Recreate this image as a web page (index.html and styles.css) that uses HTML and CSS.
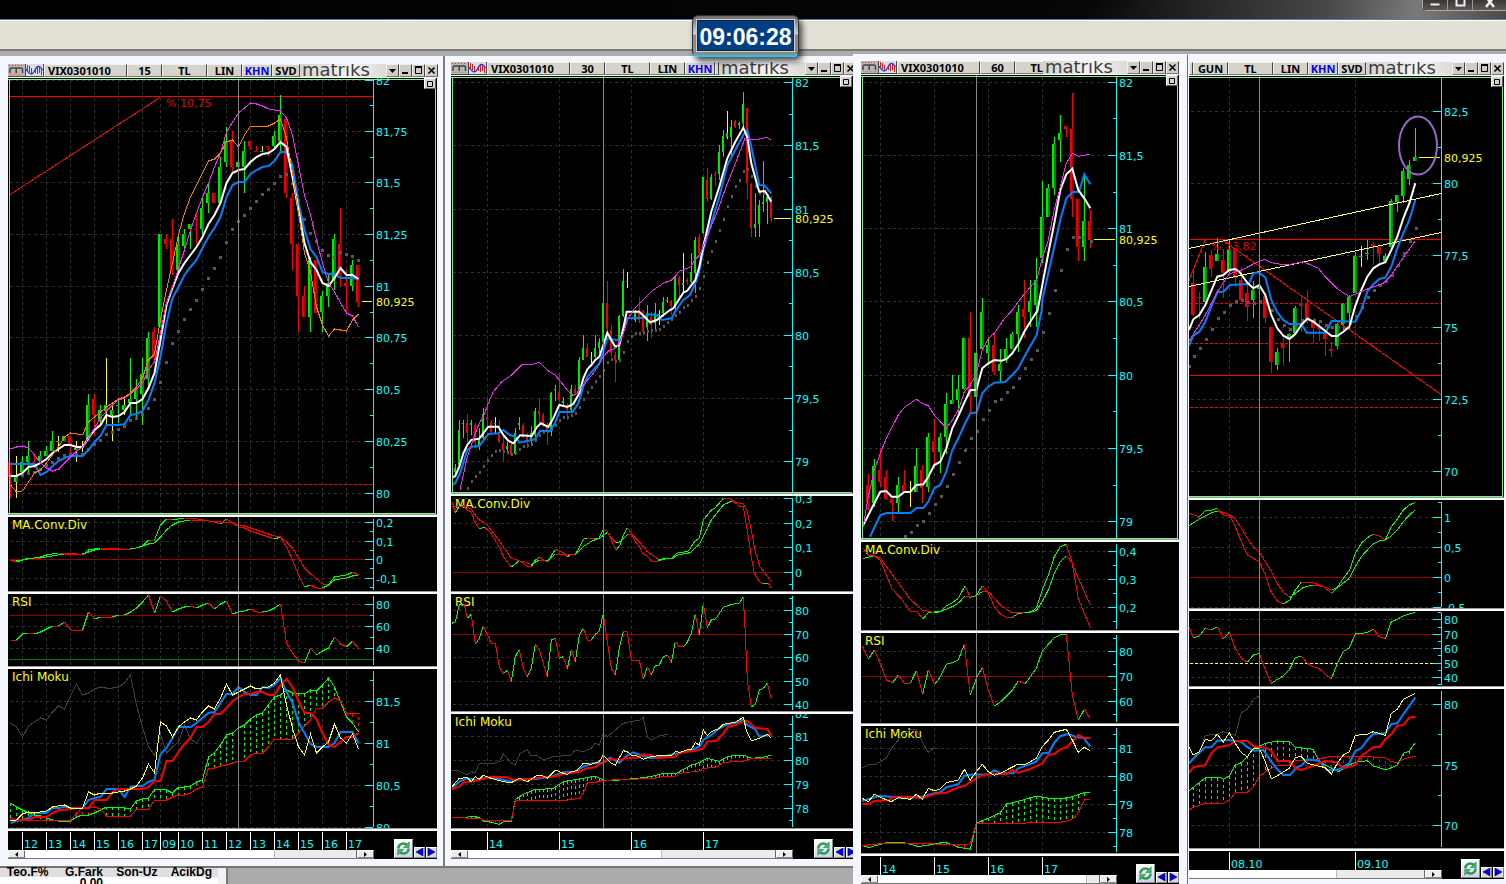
FILE: index.html
```html
<!DOCTYPE html>
<html lang="tr">
<head>
<meta charset="utf-8">
<title>Matriks - VIX0301010</title>
<link rel="stylesheet" href="styles.css">
</head>
<body>
<svg class="defs" aria-hidden="true">
  <symbol id="i-brand" viewBox="0 0 18 13">
    <rect x="0" y="0" width="17" height="12" fill="#b9b7b3"/>
    <path d="M1 1.500h15" stroke="#e33" stroke-dasharray="1 2"/>
    <path d="M2 10.500h14" stroke="#f66" stroke-dasharray="1 1"/>
    <path d="M2 9V5.500Q2 4 3.500 4H13Q14.500 4 14.500 5.500V9M8.200 4V9" fill="none" stroke="#444" stroke-width="1.500"/>
  </symbol>
  <symbol id="i-wave" viewBox="0 0 18 13">
    <rect x="0" y="0" width="17" height="12" fill="#dcdce4"/>
    <path d="M1.500 1V7M3.500 2V8M5.500 4V10M9.500 4V9M11.500 2V10M13.500 3V9M15.500 5V11" stroke="#e01818"/>
    <path d="M0 5C3 10 6 12 8.500 7S13 0 16.500 6" fill="none" stroke="#2233dd" stroke-width="1.300"/>
  </symbol>
  <symbol id="i-down" viewBox="0 0 11 11"><path d="M2 4H9L5.500 8Z" fill="#000"/></symbol>
  <symbol id="i-min" viewBox="0 0 11 11"><path d="M2 7H8V9H2Z" fill="#000"/></symbol>
  <symbol id="i-max" viewBox="0 0 11 11"><path d="M2.500 2.500H8.500V8.500H2.500Z" fill="none" stroke="#000"/><path d="M2 2H9" stroke="#000" stroke-width="2"/></symbol>
  <symbol id="i-close" viewBox="0 0 11 11"><path d="M2.500 2.500L8.500 8.500M8.500 2.500L2.500 8.500" stroke="#000" stroke-width="1.600"/></symbol>
  <symbol id="i-box" viewBox="0 0 11 11"><path d="M2.500 2.500H7.500V7.500H2.500Z" fill="none" stroke="#000"/></symbol>
  <symbol id="i-refresh" viewBox="0 0 18 18">
    <path d="M3.500 9A5.500 5.500 0 0 1 12.500 5" fill="none" stroke="#2f9a4c" stroke-width="2.600"/>
    <path d="M14.500 9A5.500 5.500 0 0 1 5.500 13" fill="none" stroke="#2f9a4c" stroke-width="2.600"/>
    <path d="M15 2V8H9Z" fill="#49b862" stroke="#17803a" stroke-width=".6"/>
    <path d="M3 16V10H9Z" fill="#49b862" stroke="#17803a" stroke-width=".6"/>
  </symbol>
  <symbol id="i-prev" viewBox="0 0 9 9"><path d="M8 0V8L1 4Z" fill="#0000e0" stroke="#000080" stroke-width=".6"/></symbol>
  <symbol id="i-next" viewBox="0 0 9 9"><path d="M1 0V8L8 4Z" fill="#0000e0" stroke="#000080" stroke-width=".6"/></symbol>
  <symbol id="i-left" viewBox="0 0 7 7"><path d="M5 1V6L2 3.500Z" fill="#000"/></symbol>
  <symbol id="i-right" viewBox="0 0 7 7"><path d="M2 1V6L5 3.500Z" fill="#000"/></symbol>
</svg>

<header class="titlebar">
  <div class="sysbuttons">
    <button aria-label="Minimize"><svg viewBox="0 0 14 10"><path d="M2 3H12V6H2Z" fill="#eee" stroke="#444"/></svg></button>
    <button aria-label="Maximize"><svg viewBox="0 0 14 10"><path d="M3.500 -3V5.500H11.500V-3" fill="none" stroke="#eee" stroke-width="2"/></svg></button>
    <button aria-label="Close"><svg viewBox="0 0 14 10"><path d="M3 -3L11 7M11 -3L3 7" stroke="#eee" stroke-width="2.500"/></svg></button>
  </div>
</header>
<div class="toolbar"></div>
<time class="clock"><span>09:06:28</span></time>

<main class="desktop">
  <div class="left">
    <div class="pair">
      <section class="win win-a">
        <div class="bar">
          <svg class="ic"><use href="#i-brand"/></svg><svg class="ic"><use href="#i-wave"/></svg>
          <button class="sym">VIX0301010</button><button class="per">15</button><button class="cur">TL</button><button class="lin">LIN</button><button class="khn">KHN</button><button class="svd">SVD</button>
          <span class="logo">matriks</span>
          <button class="ctl" aria-label="Menu"><svg><use href="#i-down"/></svg></button><button class="ctl" aria-label="Minimize"><svg><use href="#i-min"/></svg></button><button class="ctl" aria-label="Maximize"><svg><use href="#i-max"/></svg></button><button class="ctl" aria-label="Close"><svg><use href="#i-close"/></svg></button>
        </div>
        <div class="panes" data-chart="a"><button class="corner" aria-label="Expand"><svg><use href="#i-box"/></svg></button></div>
        <div class="foot">
          <div class="timeline"><div class="scroll"><button aria-label="Scroll left"><svg><use href="#i-left"/></svg></button><i class="track"></i><i class="thumb"></i><button aria-label="Scroll right"><svg><use href="#i-right"/></svg></button></div></div>
          <div class="nav"><button class="refresh" aria-label="Refresh"><svg><use href="#i-refresh"/></svg></button><button aria-label="Previous"><svg><use href="#i-prev"/></svg></button><button aria-label="Next"><svg><use href="#i-next"/></svg></button></div>
        </div>
      </section>
      <section class="win win-b">
        <div class="bar">
          <svg class="ic"><use href="#i-brand"/></svg><svg class="ic"><use href="#i-wave"/></svg>
          <button class="sym">VIX0301010</button><button class="per">30</button><button class="cur">TL</button><button class="lin">LIN</button><button class="khn">KHN</button><button class="sliver" aria-label="SVD"></button>
          <span class="logo">matriks</span>
          <button class="ctl" aria-label="Menu"><svg><use href="#i-down"/></svg></button><button class="ctl" aria-label="Minimize"><svg><use href="#i-min"/></svg></button><button class="ctl" aria-label="Maximize"><svg><use href="#i-max"/></svg></button><button class="ctl" aria-label="Close"><svg><use href="#i-close"/></svg></button>
        </div>
        <div class="panes" data-chart="b"><button class="corner" aria-label="Expand"><svg><use href="#i-box"/></svg></button></div>
        <div class="foot">
          <div class="timeline"><div class="scroll"><button aria-label="Scroll left"><svg><use href="#i-left"/></svg></button><i class="track"></i><i class="thumb"></i><button aria-label="Scroll right"><svg><use href="#i-right"/></svg></button></div></div>
          <div class="nav"><button class="refresh" aria-label="Refresh"><svg><use href="#i-refresh"/></svg></button><button aria-label="Previous"><svg><use href="#i-prev"/></svg></button><button aria-label="Next"><svg><use href="#i-next"/></svg></button></div>
        </div>
      </section>
    </div>
    <div class="strip">
      <table class="quotes">
        <thead><tr><th>Teo.F%</th><th>G.Fark</th><th>Son-Uz</th><th>AcikDg</th></tr></thead>
        <tbody><tr><td></td><td>0.00</td><td></td><td></td></tr></tbody>
      </table>
    </div>
  </div>
  <section class="win win-c">
    <div class="bar">
      <svg class="ic"><use href="#i-brand"/></svg><svg class="ic"><use href="#i-wave"/></svg>
      <button class="sym">VIX0301010</button><button class="per">60</button><button class="cut">TL</button>
      <span class="logo">matriks</span>
      <button class="ctl" aria-label="Menu"><svg><use href="#i-down"/></svg></button><button class="ctl" aria-label="Minimize"><svg><use href="#i-min"/></svg></button><button class="ctl" aria-label="Maximize"><svg><use href="#i-max"/></svg></button><button class="ctl" aria-label="Close"><svg><use href="#i-close"/></svg></button>
    </div>
    <div class="panes" data-chart="c"><button class="corner" aria-label="Expand"><svg><use href="#i-box"/></svg></button></div>
    <div class="foot">
      <div class="timeline"><div class="scroll"><button aria-label="Scroll left"><svg><use href="#i-left"/></svg></button><i class="track"></i><i class="thumb"></i><button aria-label="Scroll right"><svg><use href="#i-right"/></svg></button></div></div>
      <div class="nav"><button class="refresh" aria-label="Refresh"><svg><use href="#i-refresh"/></svg></button><button aria-label="Previous"><svg><use href="#i-prev"/></svg></button><button aria-label="Next"><svg><use href="#i-next"/></svg></button></div>
    </div>
  </section>
  <section class="win win-d">
    <div class="bar">
      <button class="sliver" aria-label="Symbol"></button><button class="per">GUN</button><button class="cur">TL</button><button class="lin">LIN</button><button class="khn">KHN</button><button class="svd">SVD</button>
      <span class="logo">matriks</span>
      <button class="ctl" aria-label="Menu"><svg><use href="#i-down"/></svg></button><button class="ctl" aria-label="Minimize"><svg><use href="#i-min"/></svg></button><button class="ctl" aria-label="Maximize"><svg><use href="#i-max"/></svg></button><button class="ctl" aria-label="Close"><svg><use href="#i-close"/></svg></button>
    </div>
    <div class="panes" data-chart="d"><button class="corner" aria-label="Expand"><svg><use href="#i-box"/></svg></button></div>
    <div class="foot">
      <div class="timeline"><div class="scroll"><i class="track"></i><i class="thumb"></i><button aria-label="Scroll right"><svg><use href="#i-right"/></svg></button></div></div>
      <div class="nav"><button class="refresh" aria-label="Refresh"><svg><use href="#i-refresh"/></svg></button><button aria-label="Previous"><svg><use href="#i-prev"/></svg></button><button aria-label="Next"><svg><use href="#i-next"/></svg></button></div>
    </div>
  </section>
</main>
<script src="charts.js"></script>
</body>
</html>
```
FILE: styles.css
```css
* { box-sizing: border-box; }
body {
  margin: 0;
  height: 100vh;
  overflow: hidden;
  display: flex;
  flex-direction: column;
  background: #ababab;
  font-family: "DejaVu Sans", Verdana, sans-serif;
  font-size: 11px;
}
button { margin: 0; padding: 0; font: inherit; border: 0; overflow: hidden; }
svg { display: block; }
.defs { position: absolute; width: 0; height: 0; }

.titlebar {
  flex: none;
  height: 20px;
  display: flex;
  justify-content: flex-end;
  align-items: flex-start;
  background: linear-gradient(100deg, #000 0%, #060606 72%, #484848 88%, #7c7a78 94%, #4c4a48 100%);
  border-bottom: 1px solid #5b7f9a;
}
.sysbuttons { display: flex; border: 1px solid #aaa; border-top: 0; border-right: 0; border-radius: 0 0 0 5px; background: #4a4644; }
.sysbuttons button { width: 25px; height: 10px; background: linear-gradient(#3a3634, #5c5855); border-right: 1px solid #999; }
.sysbuttons button:last-child { width: 33px; border: 0; }
.sysbuttons svg { width: 14px; height: 10px; margin: auto; }
.toolbar { flex: none; height: 31px; background: #e3e1d5; border-top: 1px solid #fff; border-bottom: 2px solid #7c7a78; }

.clock {
  position: absolute;
  top: 15px;
  left: calc(50% - 61px);
  width: 107px;
  height: 42px;
  padding: 4px;
  border: 1px solid #333;
  border-bottom: 2px solid #28c4ec;
  border-radius: 6px;
  background: linear-gradient(#6c6c6c, #d0d0d0 45%, #8a8a8a 50%, #8a8a8a);
  box-shadow: 3px 4px 6px rgba(0,0,0,.7);
}
.clock span {
  display: block;
  height: 31px;
  border: 1px solid #222;
  outline: 1px solid #ccc;
  background: #003f85;
  color: #fff;
  font: bold 23px/32px "Liberation Sans", Arial, sans-serif;
  text-align: center;
}

.desktop { flex: 1; min-height: 0; display: grid; grid-template-columns: 853fr 335fr 318fr; align-items: start; }
.left { padding-top: 5px; }
.pair { display: grid; grid-template-columns: 445fr 408fr; }
.win { background: #f4f7fd; overflow: hidden; }
.win-a { padding: 8px 6px 7px 8px; border-right: 2px solid #7f7c7e; border-bottom: 2px solid #757575; }
.win-b { padding: 6px 0 7px 6px; border-bottom: 2px solid #757575; }
.win-c { margin-top: 3px; padding: 6px 8px 20px 8px; border-right: 1px solid #6e6e6e; border-top: 1px solid #fff; }
.win-d { margin-top: 3px; padding: 8px 2px 20px 1px; }

.bar { display: flex; height: 13px; margin-bottom: 1px; background: #4b4b4b; overflow: hidden; }
.win-b .bar, .win-b .nav { margin-right: -4px; }
.win-a .bar { margin-right: -1px; }
.bar button {
  flex: none;
  height: 13px;
  background: #d6d3cb;
  border: 1px solid #f2f0ea;
  border-right-color: #444;
  border-bottom-color: #777;
  color: #000;
  font: bold 11px/12px "Noto Sans", "Open Sans", sans-serif;
}
.ic { flex: none; width: 18px; height: 13px; }
.bar .sym { width: 83px; text-align: left; padding-left: 3px; }
.bar .per, .bar .lin { width: 35px; }
.bar .cur { width: 45px; }
.bar .khn { width: 30px; color: #0000f0; }
.bar .svd { width: 28px; }
.bar .sliver { width: 4px; }
.bar .cut { width: 28px; text-align: right; border-right: 0; }
.logo {
  flex: 1;
  min-width: 0;
  height: 13px;
  padding-left: 2px;
  background: linear-gradient(90deg, #d4d2ce, #f4f4f4 60%, #dcdad6);
  color: #3d3d3d;
  font-size: 18px;
  line-height: 12px;
}
.bar .ctl { width: 13px; background: #d0cdc8; }
.bar .ctl svg { width: 11px; height: 11px; }

.panes { position: relative; background: #000; }
.pane { display: block; border-bottom: 1px solid #9a9a9a; background: #000; }
.pane + .pane { border-top: 2px solid #fff; }
.pane svg, .axis { width: 100%; height: auto; overflow: hidden; }
.corner { position: absolute; top: 0; right: 1px; width: 12px; height: 11px; background: #d8d5d0; border: 1px solid #fff; border-right-color: #666; border-bottom-color: #666; }
.corner svg { width: 11px; height: 11px; }

.foot { display: flex; align-items: flex-end; background: #000; border-top: 2px solid #fff; }
.timeline { min-width: 0; }
.win-a .timeline { flex: 366; } .win-a .nav { flex: 63; }
.win-b .timeline { flex: 342; } .win-b .nav { flex: 64; }
.win-c .timeline { flex: 256; } .win-c .nav { flex: 62; }
.win-d .timeline { flex: 253; } .win-d .nav { flex: 62; }
.scroll { display: flex; height: 9px; background: #fff; border-bottom: 1px solid #777; }
.scroll button { flex: none; width: 17px; background: #ececec; border: 1px solid #fff; border-right-color: #666; border-bottom-color: #888; }
.scroll svg { width: 7px; height: 7px; margin: auto; }
.thumb { background: #ebebeb; border-right: 1px solid #666; border-left: 1px solid #bbb; }
.win-a .track { flex: 251; } .win-a .thumb { flex: 81; }
.win-b .track { flex: 194; } .win-b .thumb { flex: 114; }
.win-c .track { flex: 210; } .win-c .thumb { flex: 12; }
.win-d .track { flex: 148; } .win-d .thumb { flex: 88; }
.nav { display: flex; justify-content: flex-end; align-items: flex-end; gap: 1px; padding-bottom: 1px; }
.nav button { width: 11px; height: 11px; background: #dcdad6; border: 1px solid #fff; border-right-color: #888; border-bottom-color: #888; }
.nav svg { width: 9px; height: 9px; }
.nav .refresh { width: 19px; height: 19px; background: linear-gradient(#fff, #cdd0ee); }
.nav .refresh svg { width: 17px; height: 17px; }

.strip { display: flex; }
.quotes { border-spacing: 0; table-layout: fixed; width: 226px; border-right: 8px solid #f0f2f6; background: #fff; font: bold 12px/9px "Liberation Sans", Arial, sans-serif; box-shadow: 2px 0 #777; }
.quotes th, .quotes td { padding: 0 6px 0 0; text-align: right; height: 9px; }
.quotes th { background: #e0dede; }
.quotes td { line-height: 13px; }

text { font-family: "DejaVu Sans", Verdana, sans-serif; font-size: 11px; }
.title { font-size: 12px; }
.cyan { fill: #00ffff; }
.yellow { fill: #ffff00; }
.red { fill: #e00000; }
```
FILE: charts.js
```js
const NS = 'http://www.w3.org/2000/svg';
const THIRD = 3;
const WHITE = '#fff', BLUE = '#0080ff', MAG = '#ff20ff', ORANGE = '#ff8000', YEL = '#ffff40', RED = '#ff0000', GREEN = '#00ff00', GREY = '#404040';

function add(parent, tag, attrs, text) {
  const n = document.createElementNS(NS, tag);
  for (const k in attrs) n.setAttribute(k, attrs[k]);
  if (text !== undefined) n.textContent = text;
  parent.appendChild(n);
  return n;
}

// "@n" sets the vertical origin; pairs are in thirds of a unit
function pairs(ox, s) {
  let oy = 0;
  const out = [];
  for (const t of s.trim().split(/\s+/)) {
    if (t[0] === '@') { oy = +t.slice(1); continue; }
    const [a, b] = t.split(',').map(Number);
    out.push([ox + a / THIRD, oy + b / THIRD]);
  }
  return out;
}
// one value for each six-unit bar
const bars = s => s.trim().split(/\s+/).map((v, i) => [10.5 + 6 * i, +v]);

function barCandles(s) {
  return s.trim().split('|').map((r, i) => {
    const [hi, top, bot, lo, c] = r.trim().split(' ');
    return { x: 10 + 6 * i, hi: +hi, top: +top, bot: +bot, lo: +lo, c };
  });
}
function pairCandles(ox, s) {
  return s.trim().split('|').map(r => {
    const [oy, x, hi, top, bot, lo, c] = r.trim().split(' ');
    const y = v => Math.round(+oy + v / THIRD);
    return { x: Math.floor(ox + x / THIRD), hi: y(hi), top: y(top), bot: y(bot), lo: y(lo), c };
  });
}
const path = p => 'M' + p.map(q => q[0].toFixed(1) + ' ' + q[1].toFixed(1)).join('L');

function line(svg, p, color, w) {
  add(svg, 'path', { d: path(p), fill: 'none', stroke: color, 'stroke-width': w, 'shape-rendering': w > 1 ? 'auto' : 'crispEdges' });
}
// green while rising, red while falling
function updown(svg, p) {
  for (let i = 1; i < p.length; i++)
    line(svg, [p[i - 1], p[i]], p[i][1] < p[i - 1][1] ? GREEN : RED, 1);
}
function at(p, x) {
  for (let i = 1; i < p.length; i++)
    if (x <= p[i][0] + 0.01) {
      const [a, b] = [p[i - 1], p[i]];
      return a[1] + (b[1] - a[1]) * (x - a[0]) / (b[0] - a[0]);
    }
  return p[p.length - 1][1];
}
function cloud(svg, a, b, x0, step) {
  for (let x = x0; x <= a[a.length - 1][0]; x += step) {
    const ya = at(a, x), yb = at(b, x);
    if (Math.abs(ya - yb) < 1) continue;
    add(svg, 'line', { x1: x, x2: x, y1: ya, y2: yb, stroke: ya < yb ? GREEN : RED, 'stroke-dasharray': '3 3', 'shape-rendering': 'crispEdges' });
  }
  line(svg, a, GREEN, 1);
  line(svg, b, RED, 1);
}
function candles(svg, list, w) {
  const col = { g: ['#00e800', '#008800', '#00ff00'], r: ['#f00000', '#a00000', '#ff0000'], y: ['#ffff00', '#c0c000', '#ffff00'] };
  for (const k of list) {
    const c = col[k.c];
    const body = k.c === 'y' ? col.g : c;
    add(svg, 'rect', { x: k.x, y: k.hi, width: 1, height: Math.max(1, k.lo - k.hi), fill: c[2] });
    const h = Math.max(1, k.bot - k.top);
    add(svg, 'rect', { x: k.x - w + 2, y: k.top, width: w - 2, height: h, fill: body[0] });
    add(svg, 'rect', { x: k.x, y: k.top, width: w > 3 ? 2 : 1, height: h, fill: w > 3 ? body[1] : body[0] });
  }
}

const A = 440, C = 850, D = 1180;

const charts = {
  a: {
    x: 8, w: 429, axis: 373, cursor: 238, step: 6, x0: 10.5, foot: [831, 19, 366],
    grid: [[22, '12'], [46, '13'], [70, '14'], [94, '15'], [118, '16'], [142, '17'], [160, '09'], [178, '10'], [202, '11'], [226, '12'], [250, '13'], [274, '14'], [298, '15'], [322, '16'], [346, '17']],
    panes: [
      { y: 78, h: 436, main: 1, major: [[80, '82'], [131, '81,75'], [182, '81,5'], [234, '81,25'], [286, '81'], [337, '80,75'], [389, '80,5'], [441, '80,25'], [493, '80']], minor: [105, 157, 208, 260, 312, 363, 415, 467], price: [301, 362],
        rules: [[96, RED], [484, RED, '3 2']], segs: [[10, 194, 160, 97, RED]], note: [166, 107, '% 10,75'], width: 4,
        candles: barCandles('462 462 477 498 r|456 477 482 498 y|456 462 472 472 g|441 456 462 472 g|456 462 463 468 r|451 456 461 461 g|446 451 456 456 g|431 441 451 451 g|436 441 442 452 y|436 436 441 441 g|436 436 446 455 r|441 448 450 462 y|441 447 448 452 y|394 405 441 441 g|394 399 415 436 r|405 410 420 425 g|358 405 411 424 y|405 410 415 441 y|400 405 406 423 g|399 405 410 415 y|358 399 403 415 g|379 389 399 417 g|358 374 394 425 g|332 338 379 388 g|327 332 358 360 r|234 234 327 327 g|234 239 244 249 r|219 239 270 275 r|234 244 270 275 g|229 234 246 249 g|224 224 229 249 g|213 229 230 244 r|198 208 229 234 g|183 193 203 213 g|193 193 203 203 r|157 167 203 203 g|127 141 162 167 g|131 141 167 172 r|157 162 167 169 g|141 151 167 193 g|141 141 146 150 r|146 151 152 152 r|146 151 152 152 y|146 146 147 156 r|131 136 146 150 g|95 115 141 152 g|119 119 193 198 r|193 198 244 270 r|244 244 296 332 r|286 296 317 317 r|257 260 317 332 g|260 260 313 313 r|291 296 312 332 g|275 283 296 307 g|234 239 280 290 g|208 244 275 286 r|270 283 286 312 r|260 265 286 291 g|265 265 302 307 r'),
        dots: bars('475 476 475 473 472 469 465 462 458 455 454 454 454 449 444 440 434 432 429 426 420 418 414 408 399 382 362 343 331 319 309 300 289 278 268 257 242 229 221 215 208 201 194 189 183 176 174 183 200 219 233 241 250 255 257 252 254 256 260'),
        lines: [
          [BLUE, 2, bars('464 464 464 464 464 475 472 466 461 458 456 456 456 450 442 436 425 425 425 424 415 414 411 400 383 357 323 298 287 275 267 260 248 237 228 217 197 185 182 182 174 170 167 166 161 152 152 165 203 230 249 257 272 274 274 278 278 278 279')],
          [WHITE, 2, bars('476 476 473 467 466 463 459 453 449 445 445 447 447 438 430 425 415 417 416 412 403 403 399 388 373 340 305 288 273 263 255 247 237 224 215 203 183 173 170 169 162 157 154 153 149 142 147 177 210 243 262 270 283 286 278 268 275 275 279')],
          [MAG, 1, bars('449 447 446 448 455 463 468 471 469 463 457 451 447 438 428 418 411 405 400 398 394 389 383 370 362 333 303 287 268 250 230 213 197 183 167 153 132 122 113 108 103 104 106 109 110 111 118 135 165 195 215 240 263 283 292 303 313 316 327')],
          [ORANGE, 1, bars('485 492 491 482 473 470 463 455 447 437 433 434 435 422 417 412 407 403 399 397 393 387 378 360 354 320 290 263 235 213 197 185 173 161 159 153 142 140 147 135 126 126 126 126 123 119 138 173 213 253 272 307 325 336 329 330 331 320 314')]] },
      { y: 517, h: 74, title: 'MA.Conv.Div', major: [[522, '0,2'], [541, '0,1'], [559, '0'], [578, '-0,1']], minor: [531, 550, 568, 587], rules: [[559, '#900']],
        ud: [bars('560 562 560 558 558 557 555 554 553 553 553 554 555 550 549 548 548 548 549 549 549 548 546 540 540 525 519 520 519 518 518 519 520 521 522 524 519 523 527 528 531 533 535 537 539 537 547 560 575 587 585 588 588 585 577 576 575 572 575'),
          bars('560 561 560 559 558 558 557 556 555 554 554 554 554 552 550 549 549 549 549 549 549 548 546 544 543 537 530 525 522 521 520 520 520 521 521 522 522 523 525 526 528 530 532 534 536 537 542 548 558 568 574 579 584 585 580 579 578 576 575')] },
      { y: 594, h: 72, title: 'RSI', major: [[604, '80'], [626, '60'], [648, '40']], minor: [615, 637], rules: [[615, '#900'], [659, '#008000']],
        ud: [bars('640 640 634 633 634 632 629 626 626 622 630 630 630 612 619 617 617 617 615 615 612 608 602 595 613 596 601 612 609 607 606 608 605 603 609 604 601 614 612 611 609 612 612 611 608 604 643 653 661 663 648 655 651 648 637 644 647 641 649')] },
      { y: 669, h: 159, title: 'Ichi Moku', major: [[701, '81,5'], [743, '81'], [785, '80,5'], [827, '80']], minor: [680, 722, 764, 806],
        cloud: [bars('803 807 810 813 815 816 818 820 821 821 821 817 815 815 813 810 807 807 807 808 809 801 799 798 789 789 790 793 787 787 786 782 780 757 753 745 735 733 728 725 719 715 713 705 697 695 690 693 693 694 690 691 685 678 687 702 717 723 732'),
          bars('820 820 820 820 820 820 820 820 820 820 820 813 808 808 807 809 816 816 816 816 816 809 809 809 800 800 800 797 795 795 793 789 787 768 768 766 765 763 761 761 755 753 753 747 739 739 739 739 733 726 720 708 708 702 698 701 713 713 713')],
        lines: [
          [GREY, 1, bars('723 727 737 726 722 718 720 712 706 709 696 684 695 693 689 687 688 688 687 683 675 705 727 747 755 734 753 747 742 725 739 743 734')],
          [BLUE, 2, bars('823 821 820 818 813 813 813 808 808 807 808 808 808 800 798 797 789 789 789 797 787 786 786 782 780 754 748 738 727 727 727 723 718 713 712 703 694 694 687 692 695 695 687 688 685 678 692 703 722 733 744 747 747 747 743 732 732 732 743')],
          [RED, 2, bars('819 820 820 820 817 817 817 813 810 810 809 808 808 808 800 800 800 792 789 789 789 789 789 787 781 781 761 761 752 744 738 727 727 722 714 714 708 701 697 694 694 692 692 695 695 685 679 687 701 713 713 719 733 745 747 742 737 737 733')],
          [YEL, 1, bars('821 820 814 812 813 812 811 807 806 805 808 808 808 792 795 793 793 793 792 791 789 786 778 764 773 722 726 737 727 722 718 720 712 706 709 698 684 695 692 689 686 689 688 687 683 675 705 728 747 755 734 753 747 742 724 738 743 734 749')]] }
    ]
  },
  b: {
    x: 451, w: 402, axis: 792, cursor: 603, step: 4, x0: 451.5, foot: [831, 19, 342],
    grid: [[487, '14'], [559, '15'], [631, '16'], [703, '17']],
    panes: [
      { y: 76, h: 417, main: 1, major: [[82, '82'], [145, '81,5'], [209, '81'], [272, '80,5'], [335, '80'], [398, '79,5'], [461, '79']], minor: [114, 177, 240, 303, 366, 430], price: [218, 774], width: 3, dot: 2,
        candles: pairCandles(A, '310 46 462 475 485 498 g|310 58 330 360 465 470 g|310 70 330 338 341 385 g|310 82 312 340 368 395 r|310 94 330 338 345 375 g|310 106 340 345 395 415 r|310 118 355 385 410 420 g|310 130 295 312 385 390 g|310 142 265 320 330 350 r|310 154 330 335 365 372 r|310 166 320 340 343 368 y|310 178 330 365 395 398 r|310 190 370 398 420 452 r|310 202 395 408 418 430 g|310 214 400 405 435 437 r|310 226 355 368 433 435 g|310 238 320 340 345 360 g|310 250 338 345 380 385 r|310 262 370 380 395 415 r|310 274 348 370 390 398 g|310 286 295 304 375 380 g|310 298 265 304 312 340 r|310 310 310 315 340 350 r|310 322 338 345 365 404 r|310 334 245 248 362 378 g|310 346 225 238 241 272 g|310 358 190 245 270 275 r|310 370 262 272 280 290 g|310 382 278 285 300 330 r|310 394 225 238 300 308 g|310 406 225 238 250 255 r|310 418 140 150 240 245 g|310 430 75 115 150 150 g|310 442 100 115 140 142 r|310 454 125 140 143 160 y|310 466 75 115 142 145 g|310 478 85 95 115 130 g|310 490 -22 -20 95 150 g|310 502 -87 -22 58 80 r|310 514 45 60 130 140 r|310 526 125 135 150 215 r|310 538 15 18 150 155 g|310 550 -123 -87 18 20 g|50 562 667 693 696 713 y|50 586 780 790 810 815 g|50 598 741 779 810 820 r|310 610 0 2 65 75 r|310 622 -15 10 50 92 g|310 634 5 20 45 85 r|50 646 760 790 820 840 g|50 658 780 792 796 825 y|50 670 742 755 790 800 g|50 682 742 750 753 760 g|50 694 750 752 768 795 r|50 706 680 683 775 780 g|50 718 677 683 705 740 r|50 730 610 700 705 730 y|50 742 685 690 695 705 r|50 754 609 667 695 700 g|50 766 560 570 670 730 g|50 778 553 562 610 625 r|50 790 380 381 550 552 g|50 802 354 390 448 455 r|50 814 372 381 447 450 g|50 826 363 371 375 408 r|50 838 286 307 371 390 g|50 850 240 258 307 322 g|50 862 184 250 260 266 y|50 874 210 230 260 320 g|50 886 210 212 230 235 r|50 898 217 220 225 238 g|50 910 126 163 220 235 g|50 922 174 175 400 448 r|50 934 400 402 535 560 r|50 946 430 523 533 560 g|50 958 450 465 523 560 g|50 970 333 457 463 486 g|50 982 430 440 457 522 g|50 994 437 440 505 515 r'),
        dots: pairs(A, '@310 86,534 98,514 110,499 122,487 134,469 146,450 158,436 170,425 182,421 194,425 206,428 218,433 230,428 242,418 254,408 266,405 278,402 290,390 302,375 314,368 326,365 338,358 350,345 362,330 374,323 386,322 398,317 410,310 422,293 434,268 446,246 458,231 470,214 482,200 494,180 504,156 516,148 528,155 540,152 552,126 564,94 576,78 588,69 600,69 612,66 624,64 636,62 648,62 660,58 672,48 684,38 696,28 708,15 720,8 @50 732,773 744,765 756,750 768,738 780,715 792,680 804,638 816,604 828,573 840,542 852,508 864,469 876,440 888,410 900,392 912,364 924,359 936,378 948,408 960,430 972,430 984,436 994,444'),
        lines: [
          [BLUE, 2, pairs(A, '@310 38,523 46,520 60,490 82,420 94,410 118,408 145,372 175,370 190,360 210,375 226,380 238,398 285,388 300,363 330,363 345,340 358,306 398,306 415,280 430,230 442,200 478,160 490,125 502,85 540,92 550,65 562,25 610,23 622,13 650,15 665,30 695,25 705,5 @50 730,750 750,735 766,700 778,665 790,600 838,440 862,345 886,300 910,255 922,240 934,290 958,405 972,406 994,430')],
          [WHITE, 2, pairs(A, '@310 38,502 46,498 58,470 70,430 82,405 94,390 118,386 130,370 145,350 175,350 190,375 205,392 220,400 240,376 275,378 290,352 303,340 325,351 340,325 358,285 382,291 400,282 418,250 430,205 442,178 454,165 466,150 478,140 490,105 502,68 514,90 526,110 538,105 550,55 560,5 598,5 630,37 650,30 690,0 @50 700,775 730,728 742,722 766,690 778,650 790,590 814,485 838,410 862,325 886,275 910,233 922,262 934,340 950,400 958,425 975,423 985,440 994,455')],
          [MAG, 1, pairs(A, '@310 60,540 82,440 106,370 118,340 130,320 145,280 160,245 185,215 215,195 245,164 280,162 298,157 320,180 345,195 370,225 385,245 400,257 410,250 430,225 460,190 480,160 490,140 505,123 530,112 548,75 565,25 580,0 @50 595,765 640,720 670,700 695,690 720,663 750,652 765,630 782,610 800,560 830,490 860,405 890,330 915,265 945,270 980,262 994,271')]] },
      { y: 496, h: 95, title: 'MA.Conv.Div', major: [[498, '0,3'], [523, '0,2'], [547, '0,1'], [572, '0']], minor: [511, 535, 560, 584], rules: [[572, '#900']],
        ud: [pairs(A, '@310 36,575 46,608 58,590 70,585 82,600 94,607 106,640 118,655 135,653 150,665 165,690 180,715 190,740 214,771 238,752 262,768 275,768 286,750 298,742 322,757 346,718 370,728 382,740 394,733 406,735 430,688 440,685 466,686 478,684 490,657 502,663 514,690 528,720 540,705 550,675 562,653 574,670 586,695 598,710 610,733 622,738 634,753 655,753 680,745 696,745 710,730 745,724 765,693 778,685 790,630 814,600 826,593 850,565 870,567 900,589 910,589 920,650 934,740 943,790 958,815 970,822 985,820 994,835'),
          pairs(A, '@310 36,588 58,590 82,590 94,598 106,615 118,630 142,645 165,675 190,710 214,745 238,752 274,763 298,750 320,753 346,732 406,735 430,710 455,693 478,685 502,667 514,683 528,698 540,695 565,672 578,675 598,695 622,725 655,748 696,745 715,735 750,728 778,703 814,630 850,585 875,573 910,582 922,605 934,660 946,725 960,770 975,790 994,815')] },
      { y: 594, h: 117, title: 'RSI', major: [[610, '80'], [634, '70'], [657, '60'], [681, '50'], [704, '40']], minor: [598, 622, 646, 669, 692], rules: [[634, '#900']],
        ud: [pairs(A, '@590 36,100 46,95 58,45 72,42 82,85 94,73 106,163 118,145 130,108 154,160 166,160 178,230 190,250 202,241 214,276 226,200 238,178 250,235 262,260 274,235 286,163 298,180 310,220 322,260 334,150 346,145 358,205 370,200 382,237 394,178 406,215 418,135 430,115 442,150 454,150 466,133 478,122 490,72 502,155 514,235 526,255 538,175 550,125 562,125 574,210 598,210 610,268 622,230 634,255 646,226 658,225 670,200 682,195 694,218 706,155 718,170 730,170 740,160 754,130 766,72 778,135 790,42 802,113 814,90 826,88 850,52 874,43 898,40 910,20 916,130 922,270 934,350 946,343 958,300 970,295 982,280 994,328')] },
      { y: 714, h: 114, title: 'Ichi Moku', major: [[713, '82'], [736, '81'], [760, '80'], [784, '79'], [808, '78']], minor: [724, 748, 772, 796, 820],
        cloud: [pairs(A, '@590 36,683 106,680 118,683 130,693 154,697 178,703 190,696 214,695 226,628 250,613 280,600 340,595 370,575 430,565 466,558 490,570 514,573 538,570 610,563 640,558 670,550 706,552 718,545 754,525 778,518 802,505 838,514 862,500 886,495 910,495 934,505 970,502 994,495'),
          pairs(A, '@590 36,683 118,685 130,690 214,690 226,632 370,632 418,625 430,610 442,578 466,577 490,571 574,568 640,565 670,560 706,558 718,550 778,543 790,535 826,532 850,517 910,514 934,506 994,505')],
        lines: [
          [GREY, 1, pairs(A, '@590 36,540 58,543 82,555 94,545 106,548 118,520 154,522 178,515 190,492 214,520 226,525 240,490 262,480 274,498 290,495 310,510 340,500 394,495 406,480 430,485 442,480 454,475 466,460 478,465 490,430 502,440 526,420 550,400 570,395 600,390 610,382 622,440 634,450 660,437 684,433')],
          [BLUE, 2, pairs(A, '@590 36,595 58,575 82,565 106,570 142,563 180,567 214,575 238,568 290,567 340,558 370,547 406,545 430,530 458,520 490,518 510,503 538,518 560,497 580,487 600,495 634,505 680,497 720,488 750,482 778,470 790,450 814,435 838,415 862,403 898,395 910,388 922,405 946,418 958,440 994,433')],
          [RED, 2, pairs(A, '@590 36,597 58,590 70,578 100,573 130,567 154,560 202,562 220,570 260,568 310,562 340,560 370,552 418,545 440,535 466,532 490,515 515,507 540,510 562,503 590,503 610,493 630,495 650,505 706,500 720,488 766,482 790,475 802,455 830,452 850,430 865,410 886,405 910,395 922,393 946,413 982,417 994,437')],
          [YEL, 1, pairs(A, '@590 36,590 58,565 82,563 94,575 106,560 118,568 130,556 154,565 190,575 214,578 238,565 262,575 290,557 310,558 322,565 346,540 370,550 382,553 394,545 410,542 430,520 454,523 478,515 490,495 502,508 514,520 526,525 550,482 562,485 574,495 586,495 610,508 634,500 670,495 694,497 706,485 720,487 740,480 754,478 766,458 778,465 790,420 802,437 814,425 838,415 850,403 886,397 910,382 920,425 934,452 958,445 982,433 994,445')]] }
    ]
  },
  c: {
    x: 861, w: 318, axis: 1116, cursor: 976, step: 6, x0: 862.5, foot: [856, 19, 256],
    grid: [[880, '14'], [934, '15'], [988, '16'], [1042, '17']],
    panes: [
      { y: 75, h: 464, main: 1, major: [[82, '82'], [155, '81,5'], [228, '81'], [301, '80,5'], [375, '80'], [448, '79,5'], [521, '79']], minor: [118, 192, 265, 338, 411, 485], price: [239, 1094], width: 4,
        candles: pairCandles(C, '310 37 515 533 537 540 r|310 55 492 525 580 600 r|310 73 447 468 578 590 g|310 91 415 480 515 532 r|310 109 480 502 568 570 r|310 127 565 568 580 632 r|310 145 500 525 578 607 g|310 163 480 525 545 548 r|310 181 513 543 546 590 y|310 199 415 468 545 546 g|310 217 466 480 535 578 r|310 235 370 382 532 545 g|310 253 327 393 427 463 r|310 271 370 382 425 490 g|310 289 250 283 380 432 g|310 307 195 270 282 282 g|310 325 195 238 270 308 g|310 343 84 85 237 240 g|310 361 7 85 262 307 r|310 379 130 130 262 262 g|310 397 -36 6 117 117 g|310 415 85 105 128 165 g|310 433 65 105 185 195 r|310 451 117 163 182 215 g|310 469 85 117 148 160 g|310 487 65 72 117 117 g|310 505 -15 6 72 127 g|310 523 -90 -3 20 83 r|310 541 -90 -27 5 50 g|50 559 624 690 765 830 g|50 577 393 502 624 640 g|50 595 403 415 500 501 g|50 613 262 282 413 435 g|50 631 195 249 269 336 g|50 649 228 229 238 261 r|50 667 129 238 447 500 r|50 685 447 448 592 633 r|50 703 370 514 590 633 g|50 721 480 514 570 593 r'),
        dots: pairs(C, '@310 166,678 184,667 202,646 220,633 238,610 256,583 274,559 292,529 310,493 328,457 346,421 364,385 382,364 400,328 418,301 436,274 454,268 472,247 490,232 508,205 525,174 543,148 561,121 579,68 597,10 @50 615,721 633,660 651,598 669,562 687,562 703,565 723,575'),
        lines: [
          [BLUE, 2, pairs(C, '@310 60,680 91,615 109,609 181,609 200,594 220,594 235,575 253,535 271,525 289,485 307,420 325,385 343,345 361,310 380,307 397,250 415,230 433,218 465,216 487,195 505,175 523,140 541,108 560,75 575,0 @50 577,750 595,670 613,590 631,510 649,445 667,427 687,425 703,373 721,403')],
          [WHITE, 2, pairs(C, '@310 40,645 60,605 91,545 109,543 125,560 145,560 163,546 181,545 199,525 220,523 235,500 253,465 271,455 289,415 307,355 325,318 343,278 361,240 379,240 397,175 415,160 433,150 455,152 470,147 487,130 505,102 523,65 541,35 560,5 @50 562,785 577,705 595,610 613,520 631,420 649,373 667,356 685,420 703,445 721,475')],
          [MAG, 1, pairs(C, '@310 40,650 55,560 73,480 91,430 109,385 127,350 145,315 163,292 199,268 217,280 235,287 253,315 271,335 289,355 307,330 325,300 343,245 361,225 379,190 397,120 415,85 433,70 460,30 487,0 @50 520,735 560,690 577,625 595,570 613,480 631,410 649,340 667,310 685,319 721,313')]] },
      { y: 542, h: 88, title: 'MA.Conv.Div', major: [[551, '0,4'], [579, '0,3'], [607, '0,2']], minor: [565, 593, 621], rules: [],
        ud: [pairs(C, '@310 40,745 70,738 91,750 109,795 127,838 155,868 @590 163,40 181,64 200,64 218,87 236,67 271,65 289,48 307,38 325,25 345,-12 361,22 379,17 397,-13 415,10 420,20 433,50 451,72 470,82 487,82 505,70 541,67 559,55 577,0 @310 595,795 613,740 631,710 649,703 667,760 685,865 @590 703,70 721,113'),
          pairs(C, '@310 40,715 55,735 73,737 91,745 150,825 180,868 @590 181,28 217,60 253,68 271,65 307,50 325,40 345,18 361,22 379,17 397,5 415,5 433,25 451,45 470,58 487,68 523,69 559,62 577,35 595,0 @310 613,790 631,755 649,738 667,760 685,805 703,845 @590 721,45')] },
      { y: 633, h: 90, title: 'RSI', major: [[651, '80'], [676, '70'], [701, '60']], minor: [638, 664, 689, 714], rules: [[676, '#900']],
        ud: [pairs(C, '@590 37,168 55,207 73,180 91,220 109,270 127,278 145,256 163,280 181,280 199,242 218,312 235,240 254,283 271,260 289,223 307,218 325,210 343,163 361,315 379,265 397,232 415,300 433,348 451,337 487,300 505,273 525,282 541,260 559,235 577,183 613,143 630,135 649,133 667,315 685,390 703,358 721,388')] },
      { y: 726, h: 127, title: 'Ichi Moku', major: [[748, '81'], [776, '80'], [804, '79'], [832, '78']], minor: [734, 762, 790, 818, 846],
        cloud: [pairs(C, '@590 37,765 55,773 73,768 109,758 163,758 199,768 217,768 253,763 271,758 289,757 325,772 343,775 361,778 379,700 397,692 415,685 451,668 469,642 505,634 559,618 595,625 631,627 667,620 703,608 721,606'),
          pairs(C, '@590 37,765 55,765 91,761 190,760 343,765 361,762 379,700 523,700 541,696 625,697 655,693 670,685 685,668 703,630 721,627')],
        lines: [
          [GREY, 1, pairs(C, '@590 37,533 55,524 73,525 109,505 124,475 145,450 163,430 181,420 199,418 217,455 235,487 253,473')],
          [BLUE, 2, pairs(C, '@590 37,633 73,622 91,618 124,620 160,625 217,620 253,610 271,607 289,592 325,583 343,557 361,554 415,553 433,541 451,549 490,550 505,535 541,522 559,515 577,490 597,488 613,458 631,438 655,432 680,442 700,443 721,470')],
          [RED, 2, pairs(C, '@590 37,642 58,642 73,633 118,630 130,620 181,620 217,625 253,612 289,608 325,592 343,588 379,565 400,554 451,551 470,552 487,540 505,548 541,537 577,520 595,495 613,492 631,478 650,472 685,435 703,444 721,444')],
          [YEL, 1, pairs(C, '@590 37,625 55,635 73,613 91,622 124,635 145,623 181,628 199,613 217,628 235,595 253,602 271,597 289,578 325,570 343,538 361,570 379,545 397,523 415,545 433,556 451,550 505,522 523,525 541,515 559,505 577,470 595,450 613,427 649,418 667,450 685,487 703,472 721,482')]] }
    ]
  },
  d: {
    x: 1189, w: 315, axis: 1441, cursor: 1259, step: 6, x0: 1193.5, foot: [851, 19, 253],
    grid: [[1229, '08.10'], [1355, '09.10']],
    panes: [
      { y: 76, h: 421, main: 1, major: [[111, '82,5'], [183, '80'], [255, '77,5'], [327, '75'], [399, '72,5'], [471, '70']], minor: [147, 219, 291, 363, 435], price: [157, 1419], width: 4,
        rules: [[239, RED], [375, RED], [303, RED, '3 2'], [343, RED, '3 2'], [407, RED, '3 2']],
        segs: [[1189, 280, 1205, 240, RED], [1223, 240, 1441, 394, RED], [1189, 248, 1441, 193, '#ffff70'], [1189, 286, 1441, 232, '#ffff70']],
        note: [1211, 250, '% 13,82'], ring: [1418, 145, 19, 29],
        candles: pairCandles(D, '50 40 662 700 795 797 r|50 58 727 741 745 807 r|50 76 605 652 755 765 g|50 94 600 615 658 680 r|50 112 565 612 632 634 g|50 130 598 630 668 743 r|50 148 570 600 665 670 g|50 166 595 600 683 712 r|50 184 652 690 750 755 r|50 202 700 730 772 812 r|50 220 693 720 750 805 g|50 238 698 712 718 722 g|50 256 730 738 803 818 r|50 274 830 832 937 968 r|50 292 893 905 945 960 g|50 310 865 882 893 948 r|50 328 848 852 865 937 g|50 346 767 773 848 855 g|50 364 737 760 767 845 r|50 382 719 763 812 820 r|50 400 803 812 835 880 r|50 418 810 832 838 873 r|50 436 850 852 868 917 r|50 454 875 897 903 920 r|50 472 820 822 888 897 g|50 490 758 762 822 840 g|50 508 735 740 788 837 g|50 526 605 618 728 730 g|50 544 588 618 621 652 y|50 562 571 608 613 630 g|50 580 577 582 588 642 r|50 598 585 590 612 640 r|50 616 610 618 633 635 g|50 634 447 453 592 592 g|50 652 435 436 455 486 g|50 670 354 363 437 460 g|50 688 330 345 387 405 g|50 706 234 321 332 332 g'),
        dots: pairs(D, '@50 27,950 43,919 61,895 79,868 97,838 115,805 133,787 151,766 169,754 187,751 205,757 223,760 241,754 259,757 277,781 295,808 313,826 331,838 349,826 367,811 385,806 403,811 421,814 439,826 457,832 475,832 493,832 511,820 529,800 547,772 565,742 583,721 601,706 619,694 637,676 655,646 673,610 691,575 708,534'),
        lines: [
          [BLUE, 2, pairs(D, '@50 27,887 40,857 58,845 76,815 94,770 112,727 130,725 150,705 206,702 220,670 235,667 256,682 274,750 292,787 310,810 328,822 364,822 380,848 436,848 455,812 526,815 544,780 562,725 580,703 598,687 616,683 634,650 652,595 670,550 688,510 706,450')],
          [WHITE, 2, pairs(D, '@50 27,840 40,808 58,795 76,765 94,722 112,680 130,675 148,660 166,657 178,665 202,698 220,715 238,705 256,735 274,795 292,835 310,857 328,867 346,852 364,825 382,806 400,815 436,843 455,858 472,858 490,845 508,830 526,768 544,720 562,680 580,655 598,643 616,637 634,600 652,560 670,505 688,460 706,400')],
          [MAG, 1, pairs(D, '@50 27,873 58,825 76,795 112,725 148,672 190,658 220,642 253,628 280,640 320,645 370,635 415,655 436,680 470,715 508,740 560,718 610,700 634,675 660,637 706,572')]] },
      { y: 500, h: 108, major: [[517, '1'], [547, '0,5'], [577, '0'], [607, '-0,5']], minor: [502, 532, 562, 592], rules: [[577, '#900']],
        ud: [pairs(D, '@400 27,340 58,350 76,332 97,330 112,325 130,345 148,345 166,380 184,425 202,465 238,485 256,525 274,577 292,603 310,612 330,600 346,570 364,547 400,548 430,560 455,580 472,562 490,535 508,512 526,460 544,430 562,413 580,403 598,408 616,420 634,380 652,358 670,330 688,315 706,307'),
          pairs(D, '@400 27,377 58,357 94,338 115,333 148,343 166,358 184,383 202,415 220,440 238,457 256,485 274,515 292,550 310,577 330,592 350,577 370,562 400,555 430,560 455,570 472,563 508,535 526,500 544,470 562,450 580,432 598,423 616,420 634,408 652,390 670,365 688,345 706,330')] },
      { y: 611, h: 75, major: [[619, '80'], [634, '70'], [648, '60'], [663, '50'], [677, '40']], minor: [612, 627, 641, 655, 670, 684], rules: [[634, '#900'], [663, '#ffff40', '3 2']],
        ud: [pairs(D, '@400 27,680 40,713 58,708 76,685 94,690 112,680 130,717 148,697 166,745 184,775 202,787 220,765 238,760 256,810 274,850 292,838 310,828 328,810 346,773 364,768 382,790 400,800 418,806 436,823 454,837 472,790 490,755 508,743 526,702 560,698 580,688 598,710 616,717 634,665 652,658 670,647 706,637')] },
      { y: 689, h: 159, major: [[704, '80'], [765, '75'], [825, '70']], minor: [734, 795],
        cloud: [pairs(D, '@400 27,1172 58,1148 76,1133 120,1133 130,1138 148,1128 166,1095 184,1088 202,1070 220,1045 238,1040 256,1030 292,1023 328,1024 346,1042 400,1048 418,1085 454,1105 475,1115 508,1095 526,1087 562,1082 580,1098 598,1103 616,1110 634,1103 652,1095 670,1060 688,1053 706,1028'),
          pairs(D, '@400 27,1230 40,1222 76,1210 130,1210 148,1200 166,1178 202,1177 220,1160 238,1130 256,1115 274,1105 292,1095 328,1095 346,1080 400,1081 436,1072 454,1070 562,1070 616,1073 634,1085 652,1087 670,1078 706,1068')],
        lines: [
          [GREY, 1, pairs(D, '@400 27,1090 58,1060 76,1006 112,1003 130,995 166,1006 184,938 202,928 220,898 238,888')],
          [BLUE, 2, pairs(D, '@400 27,1090 50,1065 76,1042 94,1042 112,1022 148,1020 184,1025 200,1040 220,1052 250,1050 274,1085 292,1108 310,1125 330,1125 350,1102 364,1097 382,1078 418,1083 440,1110 472,1110 508,1090 526,1053 544,1045 562,1020 580,1002 616,1000 634,972 652,970 670,943 706,893')],
          [RED, 2, pairs(D, '@400 27,1118 40,1102 76,1095 94,1060 112,1042 148,1035 166,1023 202,1023 220,1038 256,1043 274,1052 292,1083 330,1083 346,1105 364,1110 400,1097 436,1083 470,1087 490,1105 526,1095 544,1068 562,1055 580,1042 600,1040 616,1018 634,1003 652,977 670,975 688,953 706,950')],
          [YEL, 1, pairs(D, '@400 27,1042 40,1065 58,1055 76,1018 94,1022 112,1003 130,1027 148,998 166,1030 184,1058 202,1070 220,1045 238,1045 256,1085 274,1137 292,1127 328,1105 346,1072 364,1070 382,1090 436,1103 454,1122 472,1090 490,1065 508,1055 526,1006 562,1003 580,995 616,1006 634,940 652,928 670,898 706,880')]] }
    ]
  }
};

function drawPane(c, p) {
  const svg = document.createElementNS(NS, 'svg');
  svg.setAttribute('viewBox', `${c.x} ${p.y} ${c.w} ${p.h}`);
  const top = p.y + 2, bottom = p.y + p.h - 1;
  const dash = { stroke: '#303030', 'stroke-dasharray': '3 3', 'shape-rendering': 'crispEdges' };
  for (const [x] of c.grid) add(svg, 'line', { x1: x + .5, x2: x + .5, y1: top, y2: bottom, ...dash });
  for (const [y] of p.major) add(svg, 'line', { x1: c.x + 2, x2: c.axis, y1: y + .5, y2: y + .5, ...dash });
  for (const [y, color, d] of p.rules || []) add(svg, 'line', { x1: c.x + 1, x2: c.axis, y1: y + .5, y2: y + .5, stroke: color, 'stroke-dasharray': d || 'none' });
  if (p.candles) candles(svg, p.candles, p.width);
  const dot = p.dot || 3;
  for (const [x, y] of p.dots || []) add(svg, 'rect', { x: Math.floor(x) - 1, y: Math.floor(y) - 1, width: dot, height: 3, fill: '#585858', 'shape-rendering': 'crispEdges' });
  for (const s of p.segs || []) line(svg, [[s[0], s[1] + .5], [s[2], s[3] + .5]], s[4], 1);
  if (p.note) add(svg, 'text', { x: p.note[0], y: p.note[1], class: 'red' }, p.note[2]);
  if (p.title) add(svg, 'text', { x: c.x + 4, y: p.y + 12, class: 'yellow title' }, p.title);
  if (p.cloud) cloud(svg, p.cloud[0], p.cloud[1], c.x0, c.step);
  for (const u of p.ud || []) updown(svg, u);
  for (const [color, w, q] of p.lines || []) line(svg, q, color, w);
  add(svg, 'rect', { x: c.cursor, y: p.y, width: 1, height: p.h, fill: '#868686' });
  add(svg, 'rect', { x: c.axis, y: top, width: 1, height: bottom - top, class: 'cyan' });
  for (const y of p.minor) add(svg, 'rect', { x: c.axis - 3, y, width: 3, height: 1, class: 'cyan' });
  for (const [y, t] of p.major) {
    add(svg, 'rect', { x: c.axis - 8, y, width: 8, height: 1, class: 'cyan' });
    add(svg, 'text', { x: c.axis + 3, y: y + 5, class: 'cyan' }, t);
  }
  if (p.price) {
    add(svg, 'rect', { x: p.price[1], y: p.price[0], width: c.axis - 1 - p.price[1], height: 1, class: 'yellow' });
    add(svg, 'text', { x: c.axis + 3, y: p.price[0] + 5, class: 'yellow' }, '80,925');
  }
  if (p.ring) add(svg, 'ellipse', { cx: p.ring[0], cy: p.ring[1] + .5, rx: p.ring[2], ry: p.ring[3], fill: 'none', stroke: '#9a66cc', 'stroke-width': 2 });
  if (p.main) {
    const edge = { fill: '#78f878', 'shape-rendering': 'crispEdges' };
    const last = c.x + c.w - 2;
    add(svg, 'rect', { x: c.x, y: p.y + 1, width: c.w - 1, height: 1, ...edge });
    add(svg, 'rect', { x: c.x, y: p.y + p.h - 1, width: c.w - 1, height: 1, ...edge });
    if (c !== charts.d) add(svg, 'rect', { x: c.x + 1, y: p.y + 1, width: 1, height: p.h - 1, ...edge });
    if (c !== charts.b) add(svg, 'rect', { x: last, y: p.y + 1, width: 1, height: p.h - 1, ...edge });
  }
  return svg;
}

for (const [id, c] of Object.entries(charts)) {
  const host = document.querySelector(`[data-chart="${id}"]`);
  for (const p of c.panes) {
    const box = document.createElement('div');
    box.className = 'pane';
    box.appendChild(drawPane(c, p));
    host.appendChild(box);
  }
  const [y, h, w] = c.foot;
  const axis = document.createElementNS(NS, 'svg');
  axis.setAttribute('viewBox', `${c.x} ${y} ${w} ${h}`);
  axis.setAttribute('class', 'axis');
  for (const [x, t] of c.grid) {
    add(axis, 'rect', { x, y: y + 1, width: 1, height: h - 1, fill: '#fff' });
    add(axis, 'text', { x: x + 2, y: y + 17, class: 'cyan' }, t);
  }
  const timeline = host.parentNode.querySelector('.timeline');
  timeline.insertBefore(axis, timeline.firstChild);
}
```
